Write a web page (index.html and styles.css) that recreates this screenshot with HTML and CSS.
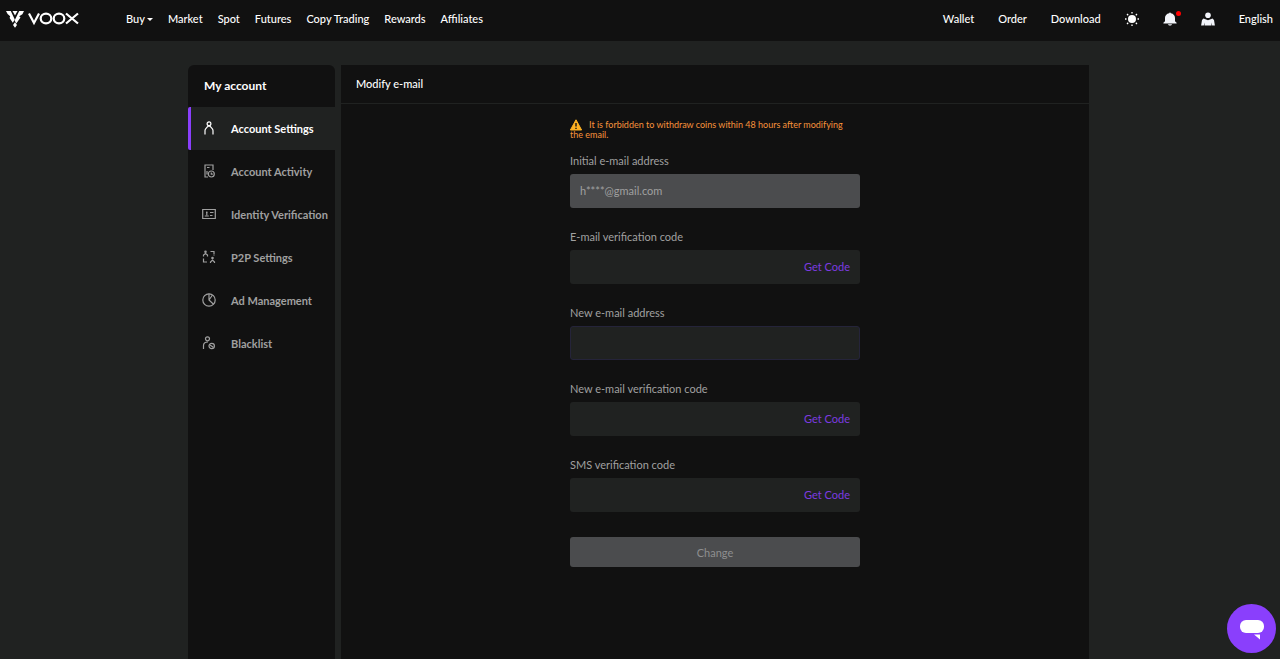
FILE: index.html
```html
<!DOCTYPE html>
<html lang="en">
<head>
    <meta charset="UTF-8">
    <meta name="viewport" content="width=device-width, initial-scale=1.0">
    <title>VOOX - Modify e-mail</title>
    <link rel="stylesheet" href="styles.css">
</head>
<body>
    <header class="header">
        <a class="logo" href="#" aria-label="VOOX">
            <svg width="73" height="18" viewBox="0 0 73 18" fill="none">
                <path d="M0 1h4.800l4 8.500-2 3.300L3.600 8l.6-1.800L1.600 4z" fill="#fff"/>
                <path d="M18 1h-4.800l-4.600 9.500 1.700 3L14.500 7.500l-1.300-1.300 3.200-2z" fill="#fff"/>
                <path d="M6.500 1h5L9 5.500z" fill="#fff"/>
                <path d="M9 12.300l2 2.700-2 2.700L7 15z" fill="#fff"/>
                <g stroke="#fff" stroke-width="2.200">
                    <path d="M23 3.500l5 9.500 5-9.500"/>
                    <ellipse cx="40" cy="8.500" rx="5.300" ry="4.800"/>
                    <ellipse cx="53" cy="8.500" rx="5.300" ry="4.800"/>
                    <path d="M60 3.500L72 13.500M72 3.500L60 13.500"/>
                </g>
            </svg>
        </a>
        <nav class="nav">
            <a class="buy" href="#">Buy</a>
            <a href="#">Market</a>
            <a href="#">Spot</a>
            <a href="#">Futures</a>
            <a href="#">Copy Trading</a>
            <a href="#">Rewards</a>
            <a href="#">Affiliates</a>
        </nav>
        <nav class="nav nav-right">
            <a href="#">Wallet</a>
            <a href="#">Order</a>
            <a href="#">Download</a>
            <button class="icon-btn" type="button" aria-label="Theme">
                <svg width="14" height="14" viewBox="0 0 14 14">
                    <circle cx="7" cy="7" r="4" fill="#fff"/>
                    <path d="M7 0v1.500M7 12.500V14M0 7h1.500M12.500 7H14M2 2l1.200 1.200M10.800 10.800L12 12M2 12l1.200-1.200M10.800 3.200L12 2" stroke="#fff" stroke-width="1.300"/>
                </svg>
            </button>
            <button class="icon-btn" type="button" aria-label="Notifications">
                <svg width="14" height="14" viewBox="0 0 14 14" fill="#f2f4fa">
                    <path d="M6.200 1.200a.8.800 0 0 1 1.600 0C10.500 1.700 12 3.600 12 6v3.300l1.600 1.400v.8H.4v-.8L2 9.300V6c0-2.400 1.500-4.300 4.200-4.800z"/>
                    <path d="M4.800 12.200h4.400L8 13.400H6z"/>
                </svg>
                <span class="dot"></span>
            </button>
            <button class="icon-btn" type="button" aria-label="Profile">
                <svg width="14" height="14" viewBox="0 0 14 14" fill="#f2f4fa">
                    <circle cx="7" cy="3.200" r="2.800"/>
                    <path d="M2.500 6.500L7 8.300l4.500-1.800 1.500 1.500.9 5.500h-2.700l-.7-3v3h-7v-3l-.7 3H.1L1 8z"/>
                </svg>
            </button>
            <a href="#">English</a>
        </nav>
    </header>

    <div class="layout">
        <aside class="sidebar">
            <h2>My account</h2>
            <a class="item active" href="#">
                <svg viewBox="0 0 14 14"><circle cx="7" cy="2.800" r="1.900"/><path d="M3 13.500V9.500c0-1.500 1.500-2.500 2.200-3.500L7 4.700 8.800 6c.7 1 2.200 2 2.200 3.500v4"/></svg>
                Account Settings
            </a>
            <a class="item" href="#">
                <svg viewBox="0 0 14 14"><path d="M6 13H3V1h8v5M5 3.500h2.500M5 10.500V7"/><circle cx="9.300" cy="10" r="3"/><path d="M9.300 8.500V10.200h1.500"/></svg>
                Account Activity
            </a>
            <a class="item" href="#">
                <svg viewBox="0 0 14 14"><path d="M.7 2.500h12.600v9H.7zM8 5.500h3.500M8 8.500h2.500M2.800 9h4"/><path d="M4.800 4.500v4M4 5.500h1.600"/></svg>
                Identity Verification
            </a>
            <a class="item" href="#">
                <svg viewBox="0 0 14 14"><circle cx="3.500" cy="1.800" r=".7"/><path d="M1.500 6.500V5l2-1.500 2 1.500v1.500M8.500 1.500H12V4M12 4.500v1M1.500 8.500V12H5"/><circle cx="10.500" cy="8" r=".7"/><path d="M8.500 13v-1l2-2 2 2v1"/></svg>
                P2P Settings
            </a>
            <a class="item" href="#">
                <svg viewBox="0 0 14 14"><circle cx="7" cy="7" r="6.200"/><path d="M7 .8V7l4.500 4.200M7 7l3.500-5"/></svg>
                Ad Management
            </a>
            <a class="item" href="#">
                <svg viewBox="0 0 14 14"><circle cx="5.500" cy="2.800" r="2"/><path d="M1.500 13V9.500C1.500 7 3.500 6 6 6"/><circle cx="9.700" cy="10" r="2.700"/><path d="M8 9l3.300 2.200"/></svg>
                Blacklist
            </a>
        </aside>

        <main class="content">
            <h1>Modify e-mail</h1>
            <form class="form">
                <p class="warning">
                    <svg width="12" height="12" viewBox="0 0 12 12"><path d="M6 .8L11.600 11H.4z" fill="#fdb022" stroke="#fdb022" stroke-linejoin="round"/><path d="M6 4v3.500M6 8.700V10" stroke="#111" stroke-width="1.400"/></svg>It is forbidden to withdraw coins within 48 hours after modifying the email.
                </p>
                <label for="old-email">Initial e-mail address</label>
                <div class="field disabled">
                    <input type="text" id="old-email" value="h****@gmail.com" disabled>
                </div>
                <label for="email-code">E-mail verification code</label>
                <div class="field">
                    <input type="text" id="email-code">
                    <button type="button">Get Code</button>
                </div>
                <label for="new-email">New e-mail address</label>
                <div class="field outlined">
                    <input type="email" id="new-email">
                </div>
                <label for="new-code">New e-mail verification code</label>
                <div class="field">
                    <input type="text" id="new-code">
                    <button type="button">Get Code</button>
                </div>
                <label for="sms-code">SMS verification code</label>
                <div class="field">
                    <input type="text" id="sms-code">
                    <button type="button">Get Code</button>
                </div>
                <button class="submit" type="submit" disabled>Change</button>
            </form>
        </main>
    </div>

    <button class="chat" type="button" aria-label="Chat">
        <svg width="26" height="22" viewBox="0 0 26 22" fill="#fff">
            <rect x="1" y="2" width="24" height="13" rx="6"/>
            <path d="M15 16.500h6v5z"/>
        </svg>
    </button>
</body>
</html>
```

FILE: styles.css
```css
* {
    box-sizing: border-box;
}

body {
    margin: 0;
    min-height: 100vh;
    display: flex;
    flex-direction: column;
    background-color: #202221;
    color: #fff;
    font-family: Lato, "Open Sans", sans-serif;
    font-size: 11px;
}

a {
    color: inherit;
    text-decoration: none;
}

button,
input {
    font: inherit;
    color: inherit;
    background: none;
    border: none;
    padding: 0;
}

button {
    cursor: pointer;
}

.header {
    display: flex;
    align-items: center;
    height: 41px;
    padding: 0 7px 4px 6px;
    background-color: #111;
}

.logo {
    display: flex;
    margin-right: 47px;
}

.nav {
    display: flex;
    align-items: center;
    gap: 15px;
    font-weight: 500;
}

.nav-right {
    gap: 24px;
    margin-left: auto;
}

.buy::after {
    content: "";
    display: inline-block;
    margin-left: 2px;
    vertical-align: 2px;
    border: 3px solid transparent;
    border-top-color: #fff;
    border-bottom: 0;
}

.icon-btn {
    position: relative;
    display: flex;
}

.dot {
    position: absolute;
    top: -1px;
    right: -4px;
    width: 5px;
    height: 5px;
    border-radius: 50%;
    background-color: #f00;
}

.layout {
    flex: 1;
    display: flex;
    gap: 6px;
    width: 100%;
    max-width: 904px;
    margin: 0 auto;
    padding: 24px 3px 0 0;
}

.sidebar {
    width: 147px;
    background-color: #111;
    border-radius: 6px 6px 0 0;
}

.sidebar h2 {
    margin: 0;
    padding-left: 16px;
    font-size: 12px;
    line-height: 42px;
}

.item {
    display: flex;
    align-items: center;
    gap: 15px;
    height: 43px;
    padding: 0 0 1px 11px;
    border-left: 3px solid transparent;
    border-radius: 2px 0 0 2px;
    color: #a0a0a0;
    font-weight: bold;
    white-space: nowrap;
}

.item svg {
    width: 14px;
    height: 14px;
    fill: none;
    stroke: currentColor;
    stroke-width: 1.2;
}

.item.active {
    color: #fff;
    background-color: #202221;
    border-left-color: #8a3ffc;
}

.content {
    flex: 1;
    background-color: #111;
}

.content h1 {
    margin: 0;
    padding-left: 15px;
    border-bottom: 1px solid #202221;
    font-size: 11px;
    font-weight: 500;
    line-height: 38px;
}

.form {
    display: flex;
    flex-direction: column;
    width: 100%;
    max-width: 290px;
    margin: 0 auto;
    padding: 16px 0;
}

.warning {
    margin: 0 0 12px;
    padding-right: 10px;
    color: #f7933c;
    font-size: 9px;
    line-height: 10px;
}

.warning svg {
    margin: -4px 7px -2px 0;
    vertical-align: middle;
}

.form label {
    margin-bottom: 4px;
    color: #a0a0a0;
    line-height: 18px;
}

.field {
    display: flex;
    height: 34px;
    margin-bottom: 20px;
    padding: 0 10px 2px;
    background-color: #202221;
    border-radius: 3px;
}

.field input {
    flex: 1;
    min-width: 0;
    outline: none;
}

.field button {
    color: #7d3be0;
}

.field.disabled {
    background-color: #4b4c4e;
    color: #a0a0a0;
}

.field.outlined {
    border: 1px solid #25243a;
}

.submit {
    height: 30px;
    margin-top: 5px;
    border-radius: 3px;
    background-color: #4b4c4e;
    color: #8e8f90;
}

.chat {
    position: fixed;
    right: 4px;
    bottom: 6px;
    display: flex;
    align-items: center;
    justify-content: center;
    width: 49px;
    height: 49px;
    border-radius: 50%;
    background-color: #8a3ffc;
}
```
